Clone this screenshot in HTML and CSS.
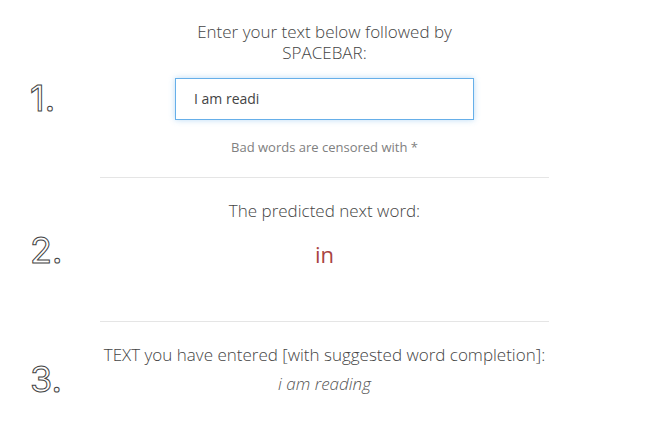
FILE: index.html
```html
<!DOCTYPE html>
<html>
<head>
<meta charset="utf-8">
<link rel="stylesheet" href="styles.css">
</head>
<body>
<div class="page">
  <section class="step step-one">
    <div class="num">1.</div>
    <div class="content">
      <p class="label">Enter your text below followed by<br>SPACEBAR:</p>
      <div class="input">I am readi</div>
      <p class="help">Bad words are censored with *</p>
    </div>
  </section>
  <section class="step step-two">
    <div class="num">2.</div>
    <div class="content">
      <p class="label">The predicted next word:</p>
      <p class="predicted">in</p>
    </div>
  </section>
  <section class="step step-three">
    <div class="num">3.</div>
    <div class="content">
      <p class="label">TEXT you have entered [with suggested word completion]:</p>
      <p class="entered">i am reading</p>
    </div>
  </section>
</div>
</body>
</html>
```
FILE: styles.css
```css
html, body {
  margin: 0;
  padding: 0;
  background: #fff;
}
body {
  font-family: "Open Sans", "Noto Sans", sans-serif;
  font-weight: 300;
  color: #444;
}
p { margin: 0; }
.page {
  width: 647px;
}
.step {
  display: grid;
  grid-template-columns: 100px 449px;
}
.num {
  font-family: Inter, "Noto Sans", sans-serif;
  font-size: 36px;
  font-weight: 400;
  color: #fff;
  -webkit-text-stroke: 1px #444;
  padding-left: 30px;
  align-self: center;
}
.step-one .num { margin-top: 17px; }
.step-three .num { margin-top: 0; }
.content {
  text-align: center;
}
.step-one .content { padding: 21px 0 21px; border-bottom: 1px solid #e5e5e5; }
.step-two .content { padding: 22px 0 52px; border-bottom: 1px solid #e5e5e5; }
.step-three .content { padding: 22px 0 40px; }
.label {
  font-size: 17px;
  line-height: 21px;
  color: #444;
}
.input {
  width: 299px;
  height: 42px;
  box-sizing: border-box;
  margin: 15px auto 0;
  border: 1px solid #66afe9;
  box-shadow: 0 0 6px rgba(102,175,233,.45);
  text-align: left;
  padding-left: 18px;
  line-height: 40px;
  font-size: 14px;
  font-weight: 400;
  color: #444;
}
.help {
  margin-top: 18px;
  font-size: 13px;
  font-weight: 400;
  color: #808080;
}
.predicted {
  margin-top: 18px;
  font-size: 22px;
  font-weight: 400;
  color: #a94442;
}
.entered {
  margin-top: 7px;
  font-size: 17px;
  font-style: italic;
  color: #555;
}
```
